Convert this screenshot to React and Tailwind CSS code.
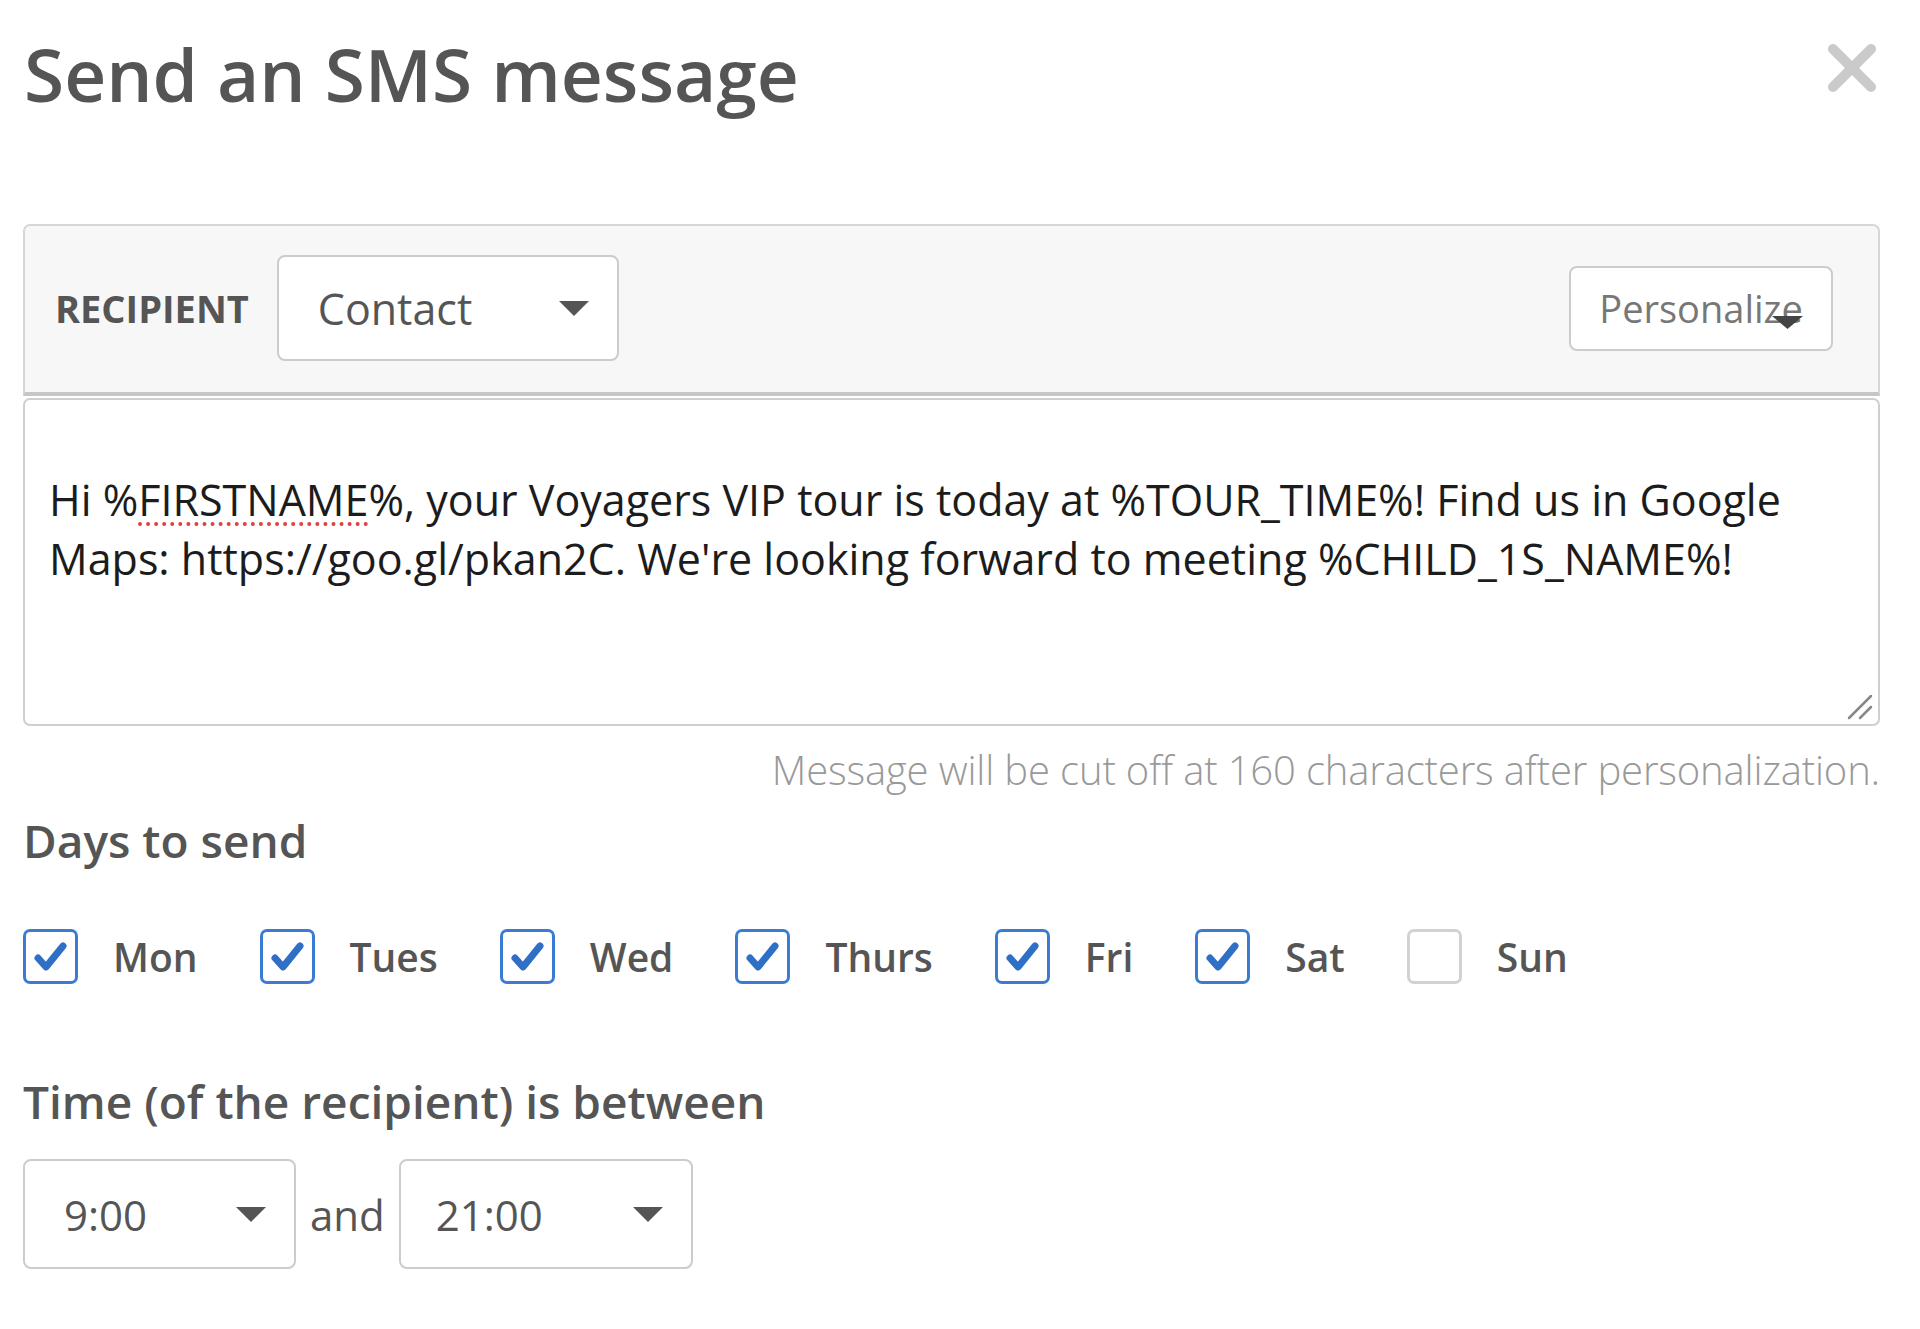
import React from "react";

const FONT = { fontFamily: '"Open Sans", "Noto Sans", Arial, sans-serif' };

function Caret({ className = "" }) {
  return (
    <svg width="30" height="15" viewBox="0 0 30 15" className={className}>
      <polygon points="0,0 30,0 15,15" fill="#555555" />
    </svg>
  );
}

function Check() {
  return (
    <svg width="55" height="55" viewBox="0 0 55 55" className="absolute left-[-3px] top-[-3px]">
      <polyline
        points="15,29 23,38 40,17"
        fill="none"
        stroke="#2f6fc6"
        strokeWidth="7"
        strokeLinecap="round"
        strokeLinejoin="round"
      />
    </svg>
  );
}

function Day({ label, checked }) {
  return (
    <div className="flex items-center gap-[35px]">
      <div
        className={
          checked
            ? "relative w-[55px] h-[55px] rounded-[7px] border-[3px] border-[#3b7bd2] bg-white"
            : "relative w-[55px] h-[55px] rounded-[7px] border-[3px] border-[#d2d2d2] bg-white"
        }
      >
        {checked && <Check />}
      </div>
      <span className="text-[39px] font-semibold text-[#555555] leading-[normal]">{label}</span>
    </div>
  );
}

export default function App() {
  const days = [
    ["Mon", true],
    ["Tues", true],
    ["Wed", true],
    ["Thurs", true],
    ["Fri", true],
    ["Sat", true],
    ["Sun", false],
  ];
  return (
    <div className="min-h-[1329px] w-full bg-white" style={FONT}>
      <div className="w-[1880px] pl-[23px] flex flex-col">
        {/* Title row */}
        <div className="flex justify-between items-start mt-[24px]">
          <h1 className="text-[73px] font-semibold text-[#555555] leading-[normal] ml-[1px]">
            Send an SMS message
          </h1>
          <svg width="50" height="50" viewBox="0 0 50 50" className="mt-[19px] mr-[3px]">
            <line x1="6" y1="6" x2="44" y2="44" stroke="#cacaca" strokeWidth="10" strokeLinecap="round" />
            <line x1="44" y1="6" x2="6" y2="44" stroke="#cacaca" strokeWidth="10" strokeLinecap="round" />
          </svg>
        </div>

        {/* Recipient panel */}
        <div className="mt-[101px] flex items-center justify-between bg-[#f7f7f7] border-2 border-[#d6d6d6] border-b-[4px] border-b-[#c6c6c6] rounded-t-[7px] pl-[30px] pr-[45px] pt-[29px] pb-[31px]">
          <div className="flex items-center gap-[28px]">
            <span className="text-[38px] font-bold text-[#555555] leading-[normal]">RECIPIENT</span>
            <div className="w-[342px] h-[106px] bg-white border-2 border-[#cccccc] rounded-[8px] flex items-center justify-between pl-[39px] pr-[28px]">
              <span className="text-[43px] text-[#555555] leading-[normal]">Contact</span>
              <Caret />
            </div>
          </div>
          <div className="relative w-[264px] h-[85px] bg-white border-2 border-[#cccccc] rounded-[8px] flex items-center justify-center">
            <span className="text-[38px] text-[#777777] leading-[normal]">Personalize</span>
            <svg width="31" height="13" viewBox="0 0 31 13" className="absolute left-[201px] top-[48px]">
              <polygon points="0,0 31,0 15.5,13" fill="#444444" />
            </svg>
          </div>
        </div>

        {/* Message textarea */}
        <div className="relative mt-[2px] h-[328px] bg-white border-2 border-[#cfcfcf] rounded-[7px] pl-[24px] pr-[40px] pt-[70px]">
          <p className="text-[43px] text-[#1c1c1c] leading-[normal]">
            Hi %<span className="underline decoration-dotted decoration-[#e0403f] decoration-[4px] underline-offset-[6px]">FIRSTNAME</span>%, your Voyagers VIP tour is today at %TOUR_TIME%! Find us in Google Maps: https://goo.gl/pkan2C. We're looking forward to meeting %CHILD_1S_NAME%!
          </p>
          <svg width="28" height="28" viewBox="0 0 28 28" className="absolute right-[5px] bottom-[4px]">
            <line x1="4" y1="26" x2="26" y2="4" stroke="#888888" strokeWidth="2.5" strokeLinecap="round" />
            <line x1="15" y1="26" x2="26" y2="15" stroke="#888888" strokeWidth="2.5" strokeLinecap="round" />
          </svg>
        </div>

        {/* Helper text */}
        <p className="mt-[16px] self-end text-[40px] font-light text-[#999999] leading-[normal] tracking-[-0.15px]">
          Message will be cut off at 160 characters after personalization.
        </p>

        {/* Days to send */}
        <h2 className="mt-[12px] text-[46px] font-semibold text-[#555555] leading-[normal]">Days to send</h2>
        <div className="mt-[58px] flex items-center gap-[62px]">
          {days.map(([d, c]) => (
            <Day key={d} label={d} checked={c} />
          ))}
        </div>

        {/* Time */}
        <h2 className="mt-[86px] text-[46px] font-semibold text-[#555555] leading-[normal]">
          Time (of the recipient) is between
        </h2>
        <div className="mt-[27px] flex items-center">
          <div className="w-[273px] h-[110px] bg-white border-2 border-[#cccccc] rounded-[8px] flex items-center justify-between pl-[39px] pr-[28px]">
            <span className="text-[42px] text-[#555555] leading-[normal]">9:00</span>
            <Caret />
          </div>
          <span className="mx-[14px] text-[42px] text-[#555555] leading-[normal]">and</span>
          <div className="w-[294px] h-[110px] bg-white border-2 border-[#cccccc] rounded-[8px] flex items-center justify-between pl-[35px] pr-[28px]">
            <span className="text-[42px] text-[#555555] leading-[normal]">21:00</span>
            <Caret />
          </div>
        </div>
      </div>
    </div>
  );
}
